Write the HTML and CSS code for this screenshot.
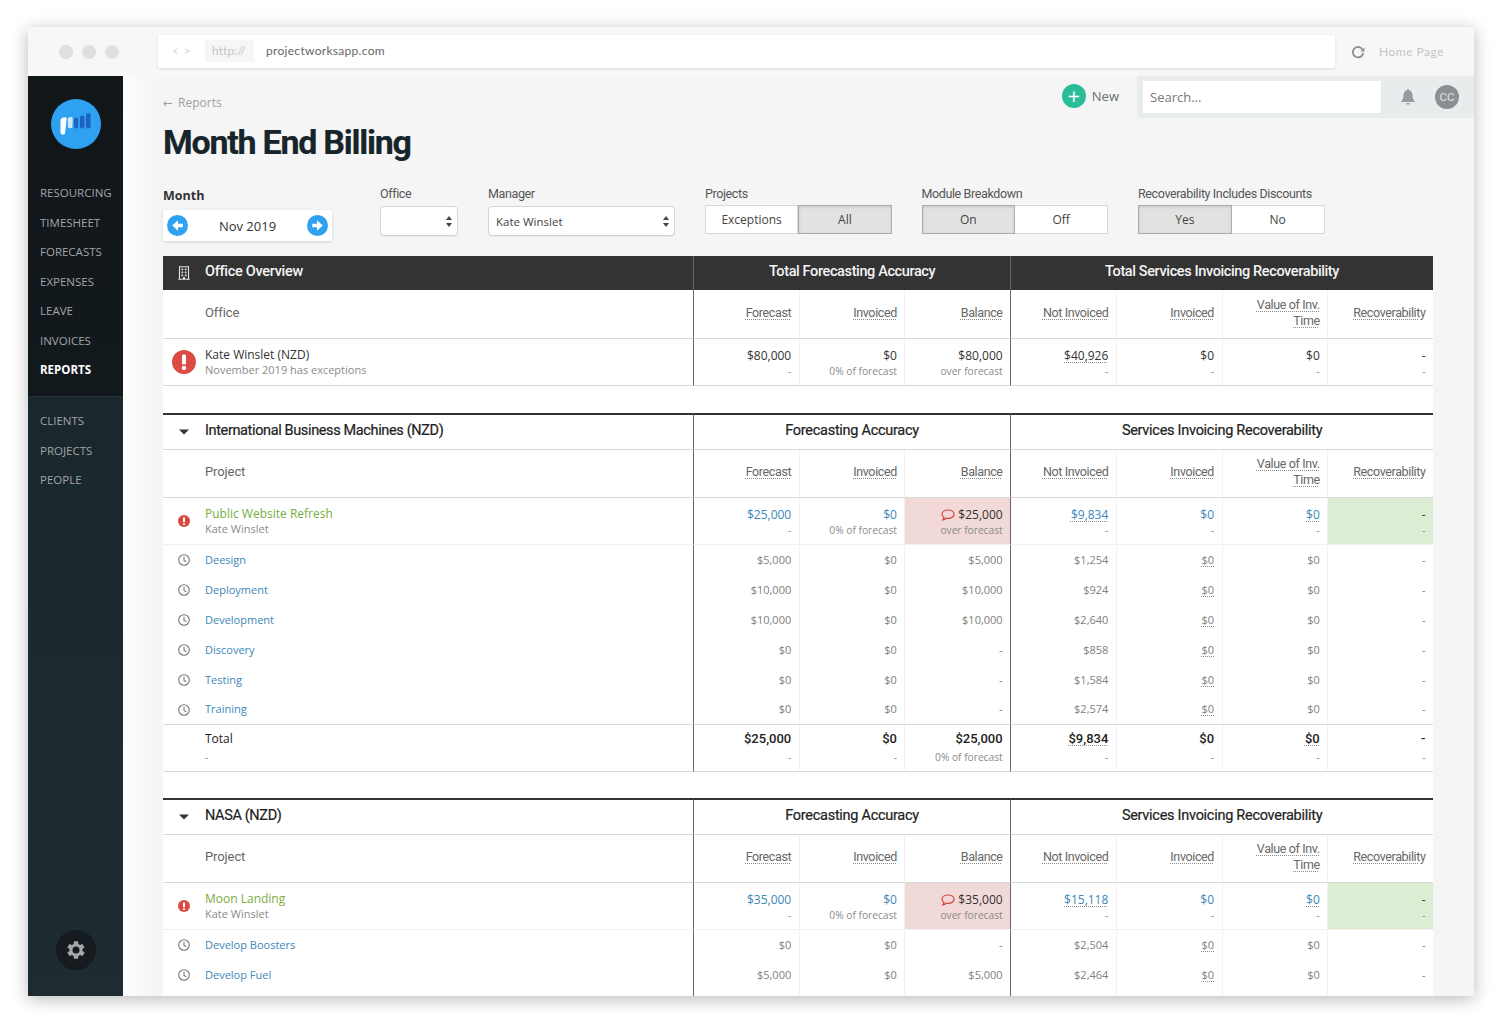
FILE: index.html
```html
<!DOCTYPE html>
<html lang="en">
<head>
<meta charset="utf-8">
<title>Month End Billing</title>
<link rel="stylesheet" href="styles.css">
</head>
<body>
<svg class="defs" width="0" height="0" aria-hidden="true">
  <symbol id="clock" viewBox="0 0 12 12"><circle cx="6" cy="6" r="5.300" fill="none" stroke="currentColor" stroke-width="1.100"/><path d="M6 2.800V6.400L8.300 7.800" fill="none" stroke="currentColor" stroke-width="1.100"/></symbol>
  <symbol id="alert" viewBox="0 0 24 24"><circle cx="12" cy="12" r="12" fill="#dc4a44"/><rect x="10" y="4.600" width="4" height="10" rx="1.400" fill="#fff"/><circle cx="12" cy="18" r="2.200" fill="#fff"/></symbol>
  <symbol id="speech" viewBox="0 0 14 12"><path d="M7 1C3.600 1 1 2.800 1 5.200c0 1.300.8 2.400 2 3.200-.1 1-.6 1.800-1.200 2.400 1.300-.1 2.600-.7 3.500-1.500.5.1 1.100.1 1.700.1 3.400 0 6-1.900 6-4.200C13 2.800 10.400 1 7 1Z" fill="none" stroke="#d6423c" stroke-width="1.200"/></symbol>
  <symbol id="caret" viewBox="0 0 10 6"><path d="M0 .5H10L5 5.500Z" fill="currentColor"/></symbol>
  <symbol id="updown" viewBox="0 0 6 11"><path d="M3 0L6 4H0ZM3 11L0 7H6Z" fill="currentColor"/></symbol>
</svg>
<div class="window">
  <header class="chrome">
    <div class="lights"><i></i><i></i><i></i></div>
    <div class="address">
      <span class="nav-arrows">&lt;&nbsp;&nbsp;&gt;</span>
      <span class="scheme">http://</span>
      <span class="url">projectworksapp.com</span>
    </div>
    <svg class="reload" viewBox="0 0 14 14" width="14" height="14"><path d="M11.800 5A5.200 5.200 0 1 0 12.200 8" fill="none" stroke="currentColor" stroke-width="1.800"/><path d="M13.500 6.500H9.300L13.500 2.500Z" fill="currentColor"/></svg>
    <span class="home">Home Page</span>
  </header>
  <div class="app">
    <aside class="sidebar">
      <div class="logo">
        <svg viewBox="0 0 50 50" width="50" height="50"><circle cx="25" cy="25" r="25" fill="#2ea2f0"/><path d="M9.500 21c0-2 5.500-4 6.200-1.400L14 34.200c-.4 2-4.700 1.500-4.500-.5Z" fill="#fff"/><path d="M16.800 19.800c0-2 4.700-2.700 4.900-.3l-.3 8.500c-.1 1.600-4.600 1.600-4.600-.1Z" fill="#cfe8fa"/><rect x="23" y="18.500" width="4.200" height="11" rx="2.100" fill="#1c64c0"/><rect x="29" y="16.500" width="4.400" height="13" rx="2.200" fill="#1c64c0"/><rect x="35" y="14" width="4.600" height="15.500" rx="2.300" fill="#1c64c0"/></svg>
      </div>
      <nav class="nav-main">
        <a>RESOURCING</a><a>TIMESHEET</a><a>FORECASTS</a><a>EXPENSES</a><a>LEAVE</a><a>INVOICES</a><a class="current">REPORTS</a>
      </nav>
      <nav class="nav-second">
        <a>CLIENTS</a><a>PROJECTS</a><a>PEOPLE</a>
      </nav>
      <div class="settings">
        <svg viewBox="0 0 24 24" width="24" height="24"><path fill="#a3a7a9" fill-rule="evenodd" d="M19.400 13a7.500 7.500 0 0 0 0-2l2.100-1.600-2-3.500-2.500 1a7.500 7.500 0 0 0-1.700-1L15 3.200h-4l-.4 2.700a7.500 7.500 0 0 0-1.700 1l-2.500-1-2 3.500L6.500 11a7.500 7.500 0 0 0 0 2l-2.100 1.600 2 3.500 2.500-1a7.500 7.500 0 0 0 1.700 1l.4 2.700h4l.4-2.700a7.500 7.500 0 0 0 1.700-1l2.500 1 2-3.500ZM13 15.500a3.500 3.500 0 1 1 0-7 3.500 3.500 0 0 1 0 7Z" transform="translate(-1 0)"/></svg>
      </div>
    </aside>
    <main class="main">
      <div class="head">
        <div class="head-left">
          <a class="crumb"><span class="back">←</span>Reports</a>
          <h1>Month End Billing</h1>
        </div>
        <div class="head-right">
          <a class="new"><span class="plus">+</span>New</a>
          <div class="searchbar">
            <span class="search">Search...</span>
            <svg class="bell" viewBox="0 0 14 16" width="14" height="16"><path d="M7 0c.7 0 1.200.5 1.200 1.200C10.500 1.800 11.500 3.700 11.500 6c0 3.500.8 5 2.200 6.200V13H.3v-.8C1.700 11 2.500 9.500 2.500 6c0-2.300 1-4.200 3.300-4.800C5.800.5 6.300 0 7 0ZM5.300 14h3.400A1.700 1.700 0 0 1 7 15.700 1.700 1.700 0 0 1 5.300 14Z" fill="currentColor"/></svg>
            <span class="avatar">CC</span>
          </div>
        </div>
      </div>
      <form class="filters">
        <div class="fg fg-month">
          <label class="month-label">Month</label>
          <div class="month">
            <svg viewBox="0 0 20 20" width="21" height="21"><circle cx="10" cy="10" r="10" fill="#2ea2f0"/><path d="M15 8.400h-4.500V5L5 10l5.500 5v-3.400H15Z" fill="#fff"/></svg>
            <span>Nov 2019</span>
            <svg viewBox="0 0 20 20" width="21" height="21"><circle cx="10" cy="10" r="10" fill="#2ea2f0"/><path d="M5 8.400h4.500V5L15 10l-5.500 5v-3.400H5Z" fill="#fff"/></svg>
          </div>
        </div>
        <div class="fg fg-office">
          <label>Office</label>
          <div class="select"><span></span><svg width="6" height="11"><use href="#updown"/></svg></div>
        </div>
        <div class="fg fg-manager">
          <label>Manager</label>
          <div class="select"><span>Kate Winslet</span><svg width="6" height="11"><use href="#updown"/></svg></div>
        </div>
        <div class="fg fg-seg">
          <label>Projects</label>
          <div class="seg"><span>Exceptions</span><span class="on">All</span></div>
        </div>
        <div class="fg fg-seg">
          <label>Module Breakdown</label>
          <div class="seg"><span class="on">On</span><span>Off</span></div>
        </div>
        <div class="fg fg-seg">
          <label>Recoverability Includes Discounts</label>
          <div class="seg"><span class="on">Yes</span><span>No</span></div>
        </div>
      </form>
      <table class="report">
        <colgroup><col class="c-icon"><col class="c-name"><col class="c-n"><col class="c-n"><col class="c-n"><col class="c-n"><col class="c-n"><col class="c-n"><col class="c-n"></colgroup>
        <tr class="band">
          <td class="ic"><svg viewBox="0 0 12 14" width="12" height="14"><path fill="none" stroke="#e8e8e8" stroke-width="1.100" d="M1.500 .8h9v12.400h-9ZM.2 13.300h11.600"/><path fill="#e8e8e8" d="M3.500 2.500h1.700v1.700H3.500ZM6.800 2.500h1.700v1.700H6.800ZM3.500 5.500h1.700v1.700H3.500ZM6.800 5.500h1.700v1.700H6.800ZM3.500 8.500h1.700v1.700H3.500ZM6.800 8.500h1.700v1.700H6.800ZM5 11h2v2H5Z"/></svg></td>
          <td class="title">Office Overview</td>
          <td class="group" colspan="3">Total Forecasting Accuracy</td>
          <td class="group" colspan="4">Total Services Invoicing Recoverability</td>
        </tr>
        <tr class="cols first">
          <td></td><td class="lbl">Office</td>
          <td class="sec"><u>Forecast</u></td><td><u>Invoiced</u></td><td><u>Balance</u></td>
          <td class="sec"><u>Not Invoiced</u></td><td><u>Invoiced</u></td><td><u>Value of Inv.</u><br><u>Time</u></td><td><u>Recoverability</u></td>
        </tr>
        <tr class="main-row end">
          <td class="ic"><svg width="24" height="24"><use href="#alert"/></svg></td>
          <td class="nm"><b>Kate Winslet (NZD)</b><small>November 2019 has exceptions</small></td>
          <td class="sec"><b>$80,000</b><small>-</small></td><td><b>$0</b><small>0% of forecast</small></td><td><b>$80,000</b><small>over forecast</small></td>
          <td class="sec"><b><u>$40,926</u></b><small>-</small></td><td><b>$0</b><small>-</small></td><td><b>$0</b><small>-</small></td><td><b>-</b><small>-</small></td>
        </tr>
        <tr class="gap"><td colspan="9"></td></tr>
        <tr class="client">
          <td class="ic"><svg width="10" height="6"><use href="#caret"/></svg></td>
          <td class="title">International Business Machines (NZD)</td>
          <td class="group" colspan="3">Forecasting Accuracy</td>
          <td class="group" colspan="4">Services Invoicing Recoverability</td>
        </tr>
        <tr class="cols">
          <td></td><td class="lbl">Project</td>
          <td class="sec"><u>Forecast</u></td><td><u>Invoiced</u></td><td><u>Balance</u></td>
          <td class="sec"><u>Not Invoiced</u></td><td><u>Invoiced</u></td><td><u>Value of Inv.</u><br><u>Time</u></td><td><u>Recoverability</u></td>
        </tr>
        <tr class="main-row">
          <td class="ic"><svg width="12" height="12"><use href="#alert"/></svg></td>
          <td class="nm"><a class="green">Public Website Refresh</a><small>Kate Winslet</small></td>
          <td class="sec"><a>$25,000</a><small>-</small></td><td><a>$0</a><small>0% of forecast</small></td>
          <td class="bad"><b><svg width="14" height="12"><use href="#speech"/></svg> $25,000</b><small>over forecast</small></td>
          <td class="sec"><a><u>$9,834</u></a><small>-</small></td><td><a>$0</a><small>-</small></td><td><a><u>$0</u></a><small>-</small></td><td class="good"><b>-</b><small>-</small></td>
        </tr>
        <tr class="sub">
          <td class="ic"><svg width="12" height="12"><use href="#clock"/></svg></td><td class="nm"><a>Deesign</a></td>
          <td class="sec">$5,000</td><td>$0</td><td>$5,000</td><td class="sec">$1,254</td><td><u>$0</u></td><td>$0</td><td>-</td>
        </tr>
        <tr class="sub">
          <td class="ic"><svg width="12" height="12"><use href="#clock"/></svg></td><td class="nm"><a>Deployment</a></td>
          <td class="sec">$10,000</td><td>$0</td><td>$10,000</td><td class="sec">$924</td><td><u>$0</u></td><td>$0</td><td>-</td>
        </tr>
        <tr class="sub">
          <td class="ic"><svg width="12" height="12"><use href="#clock"/></svg></td><td class="nm"><a>Development</a></td>
          <td class="sec">$10,000</td><td>$0</td><td>$10,000</td><td class="sec">$2,640</td><td><u>$0</u></td><td>$0</td><td>-</td>
        </tr>
        <tr class="sub">
          <td class="ic"><svg width="12" height="12"><use href="#clock"/></svg></td><td class="nm"><a>Discovery</a></td>
          <td class="sec">$0</td><td>$0</td><td>-</td><td class="sec">$858</td><td><u>$0</u></td><td>$0</td><td>-</td>
        </tr>
        <tr class="sub">
          <td class="ic"><svg width="12" height="12"><use href="#clock"/></svg></td><td class="nm"><a>Testing</a></td>
          <td class="sec">$0</td><td>$0</td><td>-</td><td class="sec">$1,584</td><td><u>$0</u></td><td>$0</td><td>-</td>
        </tr>
        <tr class="sub last">
          <td class="ic"><svg width="12" height="12"><use href="#clock"/></svg></td><td class="nm"><a>Training</a></td>
          <td class="sec">$0</td><td>$0</td><td>-</td><td class="sec">$2,574</td><td><u>$0</u></td><td>$0</td><td>-</td>
        </tr>
        <tr class="total">
          <td></td><td class="nm"><b>Total</b><small>-</small></td>
          <td class="sec"><b>$25,000</b><small>-</small></td><td><b>$0</b><small>-</small></td><td><b>$25,000</b><small>0% of forecast</small></td>
          <td class="sec"><b><u>$9,834</u></b><small>-</small></td><td><b>$0</b><small>-</small></td><td><b><u>$0</u></b><small>-</small></td><td><b>-</b><small>-</small></td>
        </tr>
        <tr class="gap short"><td colspan="9"></td></tr>
        <tr class="client">
          <td class="ic"><svg width="10" height="6"><use href="#caret"/></svg></td>
          <td class="title">NASA (NZD)</td>
          <td class="group" colspan="3">Forecasting Accuracy</td>
          <td class="group" colspan="4">Services Invoicing Recoverability</td>
        </tr>
        <tr class="cols">
          <td></td><td class="lbl">Project</td>
          <td class="sec"><u>Forecast</u></td><td><u>Invoiced</u></td><td><u>Balance</u></td>
          <td class="sec"><u>Not Invoiced</u></td><td><u>Invoiced</u></td><td><u>Value of Inv.</u><br><u>Time</u></td><td><u>Recoverability</u></td>
        </tr>
        <tr class="main-row">
          <td class="ic"><svg width="12" height="12"><use href="#alert"/></svg></td>
          <td class="nm"><a class="green">Moon Landing</a><small>Kate Winslet</small></td>
          <td class="sec"><a>$35,000</a><small>-</small></td><td><a>$0</a><small>0% of forecast</small></td>
          <td class="bad"><b><svg width="14" height="12"><use href="#speech"/></svg> $35,000</b><small>over forecast</small></td>
          <td class="sec"><a><u>$15,118</u></a><small>-</small></td><td><a>$0</a><small>-</small></td><td><a><u>$0</u></a><small>-</small></td><td class="good"><b>-</b><small>-</small></td>
        </tr>
        <tr class="sub">
          <td class="ic"><svg width="12" height="12"><use href="#clock"/></svg></td><td class="nm"><a>Develop Boosters</a></td>
          <td class="sec">$0</td><td>$0</td><td>-</td><td class="sec">$2,504</td><td><u>$0</u></td><td>$0</td><td>-</td>
        </tr>
        <tr class="sub">
          <td class="ic"><svg width="12" height="12"><use href="#clock"/></svg></td><td class="nm"><a>Develop Fuel</a></td>
          <td class="sec">$5,000</td><td>$0</td><td>$5,000</td><td class="sec">$2,464</td><td><u>$0</u></td><td>$0</td><td>-</td>
        </tr>
        <tr class="sub">
          <td></td><td></td><td class="sec"></td><td></td><td></td><td class="sec"></td><td></td><td></td><td></td>
        </tr>
      </table>
    </main>
  </div>
</div>
</body>
</html>
```
FILE: styles.css
```css
* { box-sizing: border-box; }
html, body { margin: 0; height: 100%; }
body {
  background: #fff;
  padding: 27px 26px 29px 28px;
  font-family: "Open Sans", "Noto Sans", sans-serif;
  overflow: hidden;
  height: 1025px;
}
.defs { position: absolute; }

.window {
  height: 969px;
  display: flex;
  flex-direction: column;
  overflow: hidden;
  background: #f5f5f5;
  box-shadow: 0 3px 16px rgba(0,0,0,.28);
}

/* browser chrome */
.chrome {
  height: 49px;
  flex: none;
  display: flex;
  align-items: center;
  background: #f7f7f7;
  padding: 0 0 0 31px;
}
.lights { display: flex; gap: 9px; width: 99px; flex: none; }
.lights i { width: 14px; height: 14px; border-radius: 50%; background: #dfdfdf; display: block; }
.address {
  width: 1177px;
  flex: none;
  height: 33px;
  margin-top: -1px;
  background: #fff;
  box-shadow: 0 1px 3px rgba(0,0,0,.12);
  border-radius: 2px;
  display: flex;
  align-items: center;
  padding: 0 0 1px 14px;
  font-family: Lato, "Noto Sans", sans-serif;
  font-size: 12px;
}
.nav-arrows { color: #d4d4d4; font-size: 11px; width: 33px; }
.scheme { background: #f6f6f6; color: #c4c4c4; padding: 0 7px; height: 22px; line-height: 22px; width: 49px; margin-right: 12px; letter-spacing: .1px; }
.url { color: #666; font-size: 12px; letter-spacing: .3px; }
.reload { color: #8d8d8d; margin-left: 16px; flex: none; }
.home { color: #c4c4c4; font-family: Lato, sans-serif; font-size: 12px; letter-spacing: .5px; margin: 0 0 1px 14px; white-space: nowrap; }

.app { flex: 1; display: flex; min-height: 0; }

/* sidebar */
.sidebar {
  width: 95px;
  flex: none;
  background: linear-gradient(180deg, #111619 0, #12191d 320px, #1a272d 320px, #1e2b31 100%);
  display: flex;
  flex-direction: column;
  align-items: flex-start;
  position: relative;
}
.logo { margin: 23px 0 0 23px; height: 50px; }
.nav-main, .nav-second { width: 100%; display: flex; flex-direction: column; padding-left: 12px; }
.nav-main { margin-top: 29px; height: 219px; border-bottom: 1px solid #263036; }
.nav-second { margin-top: 9px; }
.sidebar a {
  color: #a1a5a7;
  font-size: 11.500px;
  line-height: 29.500px;
  height: 29.500px;
  white-space: nowrap;
}
.sidebar a.current { color: #fff; font-weight: 700; }
.settings {
  position: absolute;
  left: 28px;
  bottom: 26px;
  width: 40px;
  height: 40px;
  border-radius: 50%;
  background: #151b1f;
  display: flex;
  align-items: center;
  justify-content: center;
}

/* main */
.main { flex: 1; min-width: 0; background: linear-gradient(90deg, #fcfcfc, #f5f5f5 36px); }
.head { display: flex; justify-content: space-between; height: 109px; padding-left: 40px; }
.head-left { padding-top: 19px; }
.crumb { display: block; color: #9aa1a5; font-size: 12px; line-height: 16px; }
.back { font-family: "DejaVu Sans", sans-serif; margin-right: 5px; }
h1 {
  margin: 10px 0 0;
  font-family: Roboto, sans-serif;
  font-weight: 700;
  font-size: 34px;
  line-height: 42px;
  letter-spacing: -1.250px;
  color: #17252b;
  -webkit-text-stroke: .2px #17252b;
}
.head-right { display: flex; align-items: flex-start; }
.new { display: flex; align-items: center; color: #6a6f72; font-size: 13px; margin: 8px 18px 0 0; height: 24px; }
.plus {
  width: 24px; height: 24px; border-radius: 50%;
  background: #2bbd9a; color: #fff;
  font-size: 22px; line-height: 23px; font-weight: 400;
  text-align: center;
  margin-right: 6px;
}
.searchbar {
  width: 337px; height: 42px;
  background: #e8ecec;
  display: flex; align-items: center;
  padding: 0 15px 0 6px;
}
.search {
  width: 238px; height: 32px; line-height: 32px;
  background: #fff; color: #777;
  font-size: 13px; padding-left: 7px;
}
.bell { color: #979c9f; margin-left: 20px; }
.avatar {
  margin-left: 20px;
  width: 24px; height: 24px; border-radius: 50%;
  background: #8a8f92; color: #e3e5e6;
  font-family: Roboto, sans-serif; font-size: 11.500px;
  line-height: 24px; text-align: center;
}

/* filters */
.filters { display: flex; padding-left: 40px; height: 71px; align-items: flex-start; gap: 30px; }
.fg label { display: block; font-family: Roboto, sans-serif; font-size: 12.500px; line-height: 16px; color: #555; letter-spacing: -.38px; padding-top: 1px; height: 16px; }
.fg-month { width: 169px; margin-right: 18px; padding-top: 2px; }
.fg-month .month-label { font-family: "Open Sans", sans-serif; font-weight: 700; font-size: 12.500px; color: #333; letter-spacing: 0; }
.month {
  margin-top: 7px;
  height: 31px; background: #fff;
  box-shadow: 0 1px 3px rgba(0,0,0,.14);
  border-radius: 2px;
  display: flex; align-items: center; justify-content: space-between;
  padding: 0 4px;
  font-size: 13px; color: #333;
}
.fg-office { width: 78px; }
.fg-manager { width: 187px; }
.fg-seg { width: 186.500px; }
.select {
  margin-top: 5px;
  height: 30px; background: #fff;
  border: 1px solid #d3d3d3; border-radius: 4px;
  display: flex; align-items: center; justify-content: space-between;
  padding: 0 5px 0 7px;
  font-size: 11.500px; color: #444;
  box-shadow: 0 1px 1px rgba(0,0,0,.05);
}
.select svg { color: #444; }
.seg { display: flex; margin-top: 4px; height: 29px; }
.seg span {
  flex: 1; background: #fff;
  border: 1px solid #d8d8d8;
  text-align: center; line-height: 27px;
  font-size: 12px; color: #444;
}
.seg span + span { border-left: 0; }
.seg span.on { background: #e2e2e2; border: 1px solid #adadad; box-shadow: inset 0 1px 3px rgba(0,0,0,.12); }

/* report */
.report {
  margin-left: 40px;
  width: 1270px;
  table-layout: fixed;
  border-collapse: separate;
  border-spacing: 0;
  background: #fff;
  font-size: 12px;
  color: #333;
}
.c-icon { width: 42px; }
.c-name { width: 488px; }
.c-n { width: 105.714px; }
.report td {
  padding: 0 7.500px 0 0;
  text-align: right;
  vertical-align: middle;
  border-left: 1px solid #f1f1f1;
  line-height: 16px;
}
.report td:nth-child(1), .report td:nth-child(2) { border-left: 0; text-align: left; }
.report td.ic { text-align: center; padding: 0; }
.report td.ic svg { display: block; margin: 0 auto; }
.report td.sec { border-left: 1px solid #666; }
.report small { display: block; font-size: 10.200px; line-height: 14px; color: #8b8b8b; }
.report .nm small { font-size: 11px; }
.report b { font-weight: 400; display: block; }
.report a { color: #3c87b8; display: block; }
.report a.green { color: #78ad3f; }
.report u { text-decoration: underline dotted #8a8a8a 1px; text-underline-offset: 2px; }

.band td { height: 34px; background: #333; color: #f3f3f3; border-left: 0; padding-bottom: 2px; }
.band td.title, .client td.title { font-family: Roboto, sans-serif; font-size: 14.500px; font-weight: 500; letter-spacing: -.3px; }
.band td.group, .client td.group {
  text-align: center; font-family: Roboto, sans-serif; font-size: 14.500px; font-weight: 500;
  letter-spacing: -.38px; padding: 0 0 2px; border-left: 1px solid #666;
}
.cols td {
  height: 48px;
  font-family: Roboto, sans-serif;
  font-size: 12.500px;
  color: #666;
  border-bottom: 1px solid #d8d8d8;
  line-height: 16px;
  letter-spacing: -.37px;
  padding-bottom: 3px;
}
.cols.first td { height: 49px; padding-bottom: 2px; }
.report .cols td.lbl { font-size: 13px; letter-spacing: -.1px; padding-bottom: 3px; }
.main-row td { height: 47px; border-bottom: 1px solid #f0f0f0; padding-top: 2px; }
.main-row.end td { border-bottom: 1px solid #d8d8d8; }
.main-row td.nm { padding-top: 0; font-size: 12px; }
.main-row td.bad { background: #f1d9d7; }
.main-row td.good { background: #dcedd3; }
.bad svg { vertical-align: -2px; }
.report .gap td { height: 27px; border: 0; padding: 0; }
.report .gap.short td { height: 26px; }
.client td {
  height: 37px;
  border-top: 2px solid #333;
  border-bottom: 1px solid #d8d8d8;
  border-left: 0;
  color: #222;
  padding-bottom: 2px;
}
.client td.ic { color: #333; }
.client td.title { font-weight: 400; letter-spacing: -.37px; color: #222; -webkit-text-stroke: .2px #222; }
.client td.group { font-weight: 400; letter-spacing: -.28px; color: #222; -webkit-text-stroke: .2px #222; }
.sub td { height: 30px; color: #808080; font-size: 11px; padding-bottom: 1px; }
.sub td.ic { color: #777; }
.sub td.nm { font-size: 11px; }
.sub.last td { border-bottom: 1px solid #d8d8d8; }
.total td { height: 47px; border-bottom: 1px solid #d8d8d8; padding-bottom: 2px; }
.total small { margin-top: 3px; }
.total b { font-family: Roboto, sans-serif; font-size: 13px; font-weight: 500; color: #222; }
.total td.nm b { font-family: "Open Sans", sans-serif; font-size: 12px; font-weight: 400; }
```
